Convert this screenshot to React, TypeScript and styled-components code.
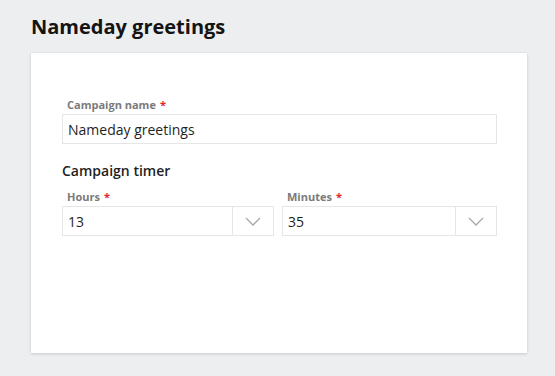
import React from "react";
import styled, { createGlobalStyle } from "styled-components";

const Global = createGlobalStyle`
  html, body { margin: 0; padding: 0; background: #edeef0; }
  body { font-family: "Open Sans", "Liberation Sans", sans-serif; color: #1f1f1f; }
  * { box-sizing: border-box; }
`;

const Page = styled.div`
  width: 555px;
  height: 376px;
  padding: 14px 28px 0 31px;
  display: flex;
  flex-direction: column;
  gap: 13px;
`;

const Title = styled.h1`
  margin: 0;
  font-size: 20px;
  line-height: 26px;
  font-weight: 700;
  color: #141414;
`;

const Card = styled.div`
  background: #fff;
  width: 496px;
  height: 300px;
  padding: 45px 30px 0 31px;
  box-shadow: 0 1px 3px rgba(0, 0, 0, 0.14), 0 0 1px rgba(0, 0, 0, 0.08);
  display: flex;
  flex-direction: column;
`;

const Field = styled.div`
  display: flex;
  flex-direction: column;
  gap: 2px;
  min-width: 0;
`;

const Label = styled.label`
  font-size: 11px;
  line-height: 14px;
  font-weight: 700;
  color: #7a7a7a;
  padding-left: 5px;
`;

const Req = styled.span`
  color: #e0262b;
  margin-left: 4px;
`;

const Input = styled.div`
  height: 30px;
  border: 1px solid #e6e6e6;
  display: flex;
  align-items: center;
  padding-left: 5px;
  font-size: 14px;
  color: #1f1f1f;
`;

const SectionTitle = styled.h2`
  margin: 17px 0 9px;
  font-size: 14px;
  line-height: 20px;
  font-weight: 600;
  color: #1f1f1f;
`;

const Row = styled.div`
  display: grid;
  grid-template-columns: 212px 1fr;
  gap: 8px;
`;

const Select = styled.div`
  height: 30px;
  border: 1px solid #e6e6e6;
  display: flex;
  align-items: stretch;
  font-size: 14px;
`;

const Value = styled.div`
  flex: 1;
  display: flex;
  align-items: center;
  padding-left: 5px;
`;

const Toggle = styled.div`
  width: 41px;
  border-left: 1px solid #e6e6e6;
  display: flex;
  align-items: center;
  justify-content: center;
`;

const Chevron = () => (
  <svg width="16" height="9" viewBox="0 0 16 9">
    <polyline points="1,1 8,8 15,1" fill="none" stroke="#a8a8a8" strokeWidth="1.3" />
  </svg>
);

export default function App() {
  return (
    <>
      <Global />
      <Page>
        <Title>Nameday greetings</Title>
        <Card>
          <Field>
            <Label>
              Campaign name<Req>*</Req>
            </Label>
            <Input>Nameday greetings</Input>
          </Field>
          <SectionTitle>Campaign timer</SectionTitle>
          <Row>
            <Field>
              <Label>
                Hours<Req>*</Req>
              </Label>
              <Select>
                <Value>13</Value>
                <Toggle>
                  <Chevron />
                </Toggle>
              </Select>
            </Field>
            <Field>
              <Label>
                Minutes<Req>*</Req>
              </Label>
              <Select>
                <Value>35</Value>
                <Toggle>
                  <Chevron />
                </Toggle>
              </Select>
            </Field>
          </Row>
        </Card>
      </Page>
    </>
  );
}
